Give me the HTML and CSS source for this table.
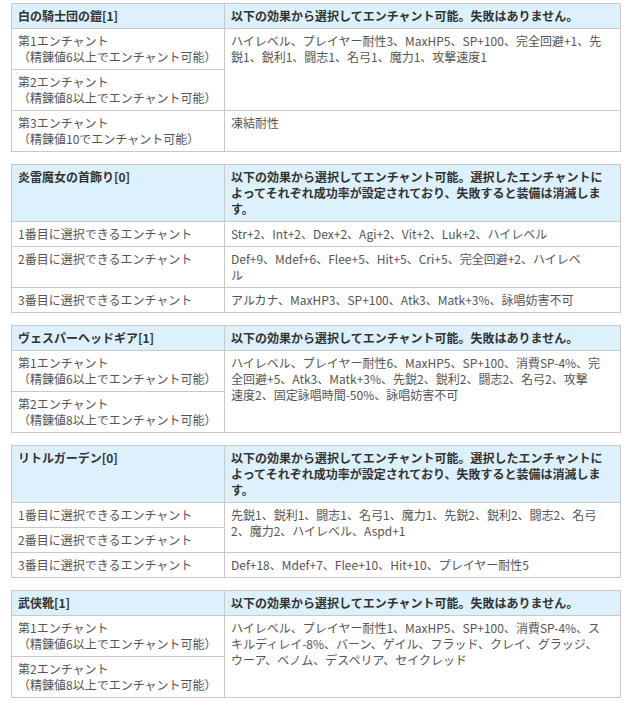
FILE: index.html
```html
<!DOCTYPE html>
<html lang="ja">
<head>
<meta charset="utf-8">
<title>エンチャント</title>
<link rel="stylesheet" href="styles.css">
</head>
<body>
<div class="page">

<table class="ench">
  <colgroup><col class="c1"><col class="c2"></colgroup>
  <tr class="head"><th>白の騎士団の鎧[1]</th><th>以下の効果から選択してエンチャント可能。失敗はありません。</th></tr>
  <tr><td>第1エンチャント<br>（精錬値6以上でエンチャント可能）</td><td rowspan="2">ハイレベル、プレイヤー耐性3、MaxHP5、SP+100、完全回避+1、先<br>鋭1、鋭利1、闘志1、名弓1、魔力1、攻撃速度1</td></tr>
  <tr><td>第2エンチャント<br>（精錬値8以上でエンチャント可能）</td></tr>
  <tr><td>第3エンチャント<br>（精錬値10でエンチャント可能）</td><td>凍結耐性</td></tr>
</table>

<table class="ench">
  <colgroup><col class="c1"><col class="c2"></colgroup>
  <tr class="head"><th>炎雷魔女の首飾り[0]</th><th>以下の効果から選択してエンチャント可能。選択したエンチャントに<br>よってそれぞれ成功率が設定されており、失敗すると装備は消滅しま<br>す。</th></tr>
  <tr><td>1番目に選択できるエンチャント</td><td>Str+2、Int+2、Dex+2、Agi+2、Vit+2、Luk+2、ハイレベル</td></tr>
  <tr><td>2番目に選択できるエンチャント</td><td>Def+9、Mdef+6、Flee+5、Hit+5、Cri+5、完全回避+2、ハイレベ<br>ル</td></tr>
  <tr><td>3番目に選択できるエンチャント</td><td>アルカナ、MaxHP3、SP+100、Atk3、Matk+3%、詠唱妨害不可</td></tr>
</table>

<table class="ench">
  <colgroup><col class="c1"><col class="c2"></colgroup>
  <tr class="head"><th>ヴェスパーヘッドギア[1]</th><th>以下の効果から選択してエンチャント可能。失敗はありません。</th></tr>
  <tr><td>第1エンチャント<br>（精錬値6以上でエンチャント可能）</td><td rowspan="2">ハイレベル、プレイヤー耐性6、MaxHP5、SP+100、消費SP-4%、完<br>全回避+5、Atk3、Matk+3%、先鋭2、鋭利2、闘志2、名弓2、攻撃<br>速度2、固定詠唱時間-50%、詠唱妨害不可</td></tr>
  <tr><td>第2エンチャント<br>（精錬値8以上でエンチャント可能）</td></tr>
</table>

<table class="ench">
  <colgroup><col class="c1"><col class="c2"></colgroup>
  <tr class="head"><th>リトルガーデン[0]</th><th>以下の効果から選択してエンチャント可能。選択したエンチャントに<br>よってそれぞれ成功率が設定されており、失敗すると装備は消滅しま<br>す。</th></tr>
  <tr><td>1番目に選択できるエンチャント</td><td rowspan="2">先鋭1、鋭利1、闘志1、名弓1、魔力1、先鋭2、鋭利2、闘志2、名弓<br>2、魔力2、ハイレベル、Aspd+1</td></tr>
  <tr><td>2番目に選択できるエンチャント</td></tr>
  <tr><td>3番目に選択できるエンチャント</td><td>Def+18、Mdef+7、Flee+10、Hit+10、プレイヤー耐性5</td></tr>
</table>

<table class="ench">
  <colgroup><col class="c1"><col class="c2"></colgroup>
  <tr class="head"><th>武侠靴[1]</th><th>以下の効果から選択してエンチャント可能。失敗はありません。</th></tr>
  <tr><td>第1エンチャント<br>（精錬値6以上でエンチャント可能）</td><td rowspan="2">ハイレベル、プレイヤー耐性1、MaxHP5、SP+100、消費SP-4%、ス<br>キルディレイ-8%、バーン、ゲイル、フラッド、クレイ、グラッジ、<br>ウーア、ベノム、デスペリア、セイクレッド</td></tr>
  <tr><td>第2エンチャント<br>（精錬値8以上でエンチャント可能）</td></tr>
</table>

</div>
</body>
</html>
```

FILE: styles.css
```css
html, body {
  margin: 0;
  padding: 0;
  background: #ffffff;
}

body {
  font-family: "Noto Sans CJK JP", "Noto Sans", sans-serif;
  font-size: 12px;
  line-height: 16px;
  color: #555555;
}

.page {
  padding: 3px 0 0 11px;
}

.ench {
  width: 610px;
  border-collapse: collapse;
  table-layout: fixed;
  margin: 0 0 12px 0;
}

.ench .c1 {
  width: 213px;
}

.ench th,
.ench td {
  border: 1px solid #c8c8c8;
  padding: 4px 5px 4px 6px;
  text-align: left;
  vertical-align: top;
  white-space: nowrap;
}

.ench .head th {
  background: #dcf1fc;
  color: #333333;
  font-weight: bold;
}
```
